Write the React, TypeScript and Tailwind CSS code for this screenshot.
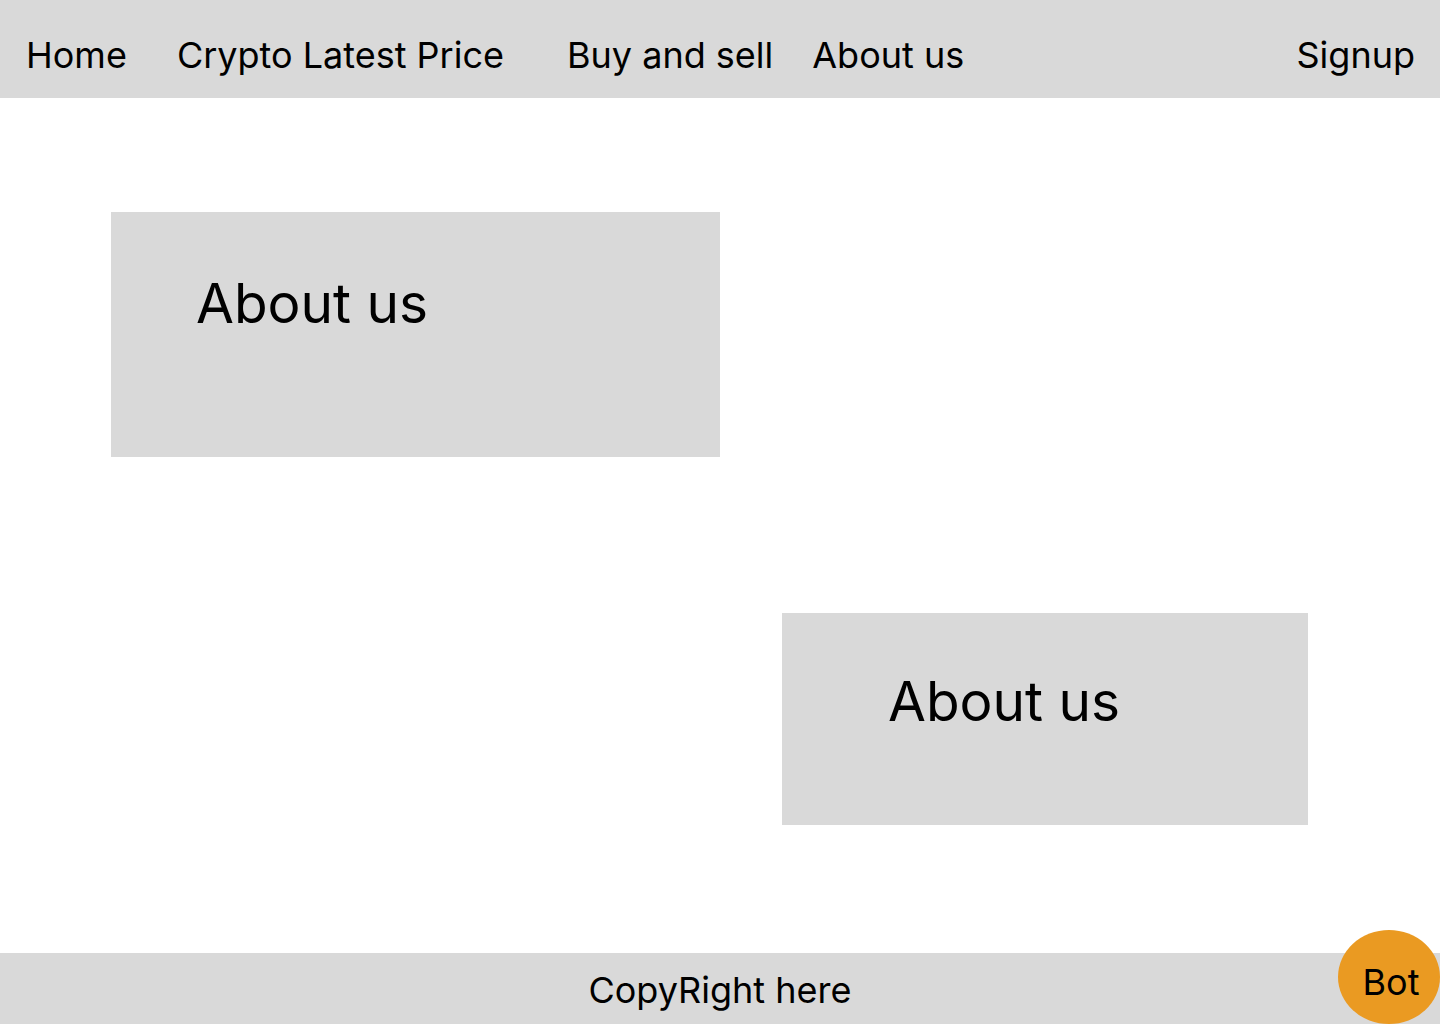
export default function App() {
  return (
    <div
      className="relative flex h-[1024px] w-[1440px] flex-col overflow-hidden bg-white text-black"
      style={{ fontFamily: "Inter, 'Noto Sans', sans-serif" }}
    >
      <header className="flex h-[98px] shrink-0 items-center bg-[#d9d9d9] pl-[26px] pr-[25px] pt-[12px] text-[36px] leading-none">
        <a className="mr-[50px]">Home</a>
        <a className="mr-[63px]">Crypto Latest Price</a>
        <a className="mr-[39px]">Buy and sell</a>
        <a>About us</a>
        <a className="ml-auto">Signup</a>
      </header>

      <main className="flex-1">
        <section className="ml-[111px] mt-[114px] h-[245px] w-[609px] bg-[#d9d9d9] pl-[85px] pt-[64px]">
          <h2 className="text-[55px] leading-none">About us</h2>
        </section>
        <section className="ml-[782px] mt-[156px] h-[212px] w-[526px] bg-[#d9d9d9] pl-[106px] pt-[61px]">
          <h2 className="text-[55px] leading-none">About us</h2>
        </section>
      </main>

      <footer className="flex h-[71px] shrink-0 items-center justify-center bg-[#d9d9d9] pt-[2px] text-[36px] leading-none">
        CopyRight here
      </footer>

      <button className="absolute left-[1338px] top-[930px] flex h-[94px] w-[102px] items-center justify-center rounded-[50%] bg-[#ea9a22] pl-[4px] pt-[10px] text-[36px] leading-none">
        Bot
      </button>
    </div>
  );
}
